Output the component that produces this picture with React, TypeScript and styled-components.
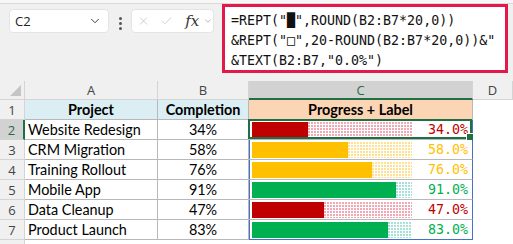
import styled, { createGlobalStyle, css } from 'styled-components';
import { X, Check, ChevronDown } from 'lucide-react';

const GREEN_SEL = '#1e6f43';
const SPILL = '#4472c4';
const GRID = '#b8b8b8';
const HEAD_LINE = '#d4d4d4';

type Tone = 'red' | 'amber' | 'green';

const toneColor: Record<Tone, string> = {
  red: '#c00000',
  amber: '#ffc000',
  green: '#00b050',
};

const toneDots: Record<Tone, string> = {
  red: 'rgba(232, 96, 120, 0.55)',
  amber: 'rgba(255, 200, 60, 0.55)',
  green: 'rgba(60, 190, 170, 0.45)',
};

const rows: { name: string; pct: number; tone: Tone }[] = [
  { name: 'Website Redesign', pct: 34, tone: 'red' },
  { name: 'CRM Migration', pct: 58, tone: 'amber' },
  { name: 'Training Rollout', pct: 76, tone: 'amber' },
  { name: 'Mobile App', pct: 91, tone: 'green' },
  { name: 'Data Cleanup', pct: 47, tone: 'red' },
  { name: 'Product Launch', pct: 83, tone: 'green' },
];

const GlobalStyle = createGlobalStyle`
  body {
    margin: 0;
    background: #ffffff;
  }
  * {
    box-sizing: border-box;
  }
`;

const Frame = styled.div`
  width: 513px;
  height: 244px;
  overflow: hidden;
  background: #ffffff;
  font-family: Lato, 'Open Sans', sans-serif;
  color: #000;
`;

const Toolbar = styled.div`
  height: 81px;
  background: #f0f0f0;
`;

const TopStrip = styled.div`
  height: 4px;
  background: #f7f7f7;
  border-bottom: 1px solid #dadada;
`;

const ToolRow = styled.div`
  display: flex;
  align-items: flex-start;
  padding-left: 9px;
`;

const NameBox = styled.div`
  margin-top: 5px;
  width: 100px;
  height: 24px;
  background: #fff;
  border: 1px solid #e4e4e4;
  border-radius: 4px;
  display: flex;
  align-items: center;
  justify-content: space-between;
  padding: 0 6px 0 5px;
  font-family: 'Open Sans', sans-serif;
  font-size: 13px;
  color: #222;
`;

const Dots = styled.div`
  width: 22px;
  margin-top: 13px;
  display: flex;
  flex-direction: column;
  align-items: center;
  gap: 2px;

  span {
    width: 3px;
    height: 3px;
    border-radius: 50%;
    background: #555;
  }
`;

const FxBox = styled.div`
  margin-top: 5px;
  width: 83px;
  height: 24px;
  background: #fff;
  border: 1px solid #e4e4e4;
  border-radius: 4px;
  display: flex;
  align-items: center;
  padding-left: 5px;
  gap: 10px;
  color: #bcbcbc;
`;

const FxLabel = styled.span`
  font-family: 'DejaVu Serif', 'Liberation Serif', serif;
  font-style: italic;
  font-size: 15px;
  color: #333;
  margin-left: 2px;
  margin-right: -6px;
`;

const FormulaBox = styled.div`
  margin-left: 8px;
  width: 286px;
  height: 69px;
  background: #fff;
  border: 3px solid #e2194a;
  padding: 4px 0 0 6px;
  font-family: 'DejaVu Sans Mono', 'Liberation Mono', monospace;
  font-size: 13.3px;
  line-height: 20px;
  white-space: pre;
  color: #111;
`;

const Sheet = styled.div`
  display: grid;
  grid-template-columns: 25px 133px 91px 224px 1fr;
  grid-template-rows: 19px repeat(8, 20px);
`;

const headBase = css`
  background: #f0f0f0;
  display: flex;
  align-items: center;
  justify-content: center;
  font-family: 'Open Sans', sans-serif;
  font-size: 13px;
  color: #444;
`;

const Corner = styled.div`
  ${headBase};
  position: relative;
  border-right: 1px solid ${HEAD_LINE};
  border-bottom: 1px solid ${HEAD_LINE};

  &::after {
    content: '';
    position: absolute;
    right: 3px;
    bottom: 3px;
    border-style: solid;
    border-width: 0 0 11px 11px;
    border-color: transparent transparent #c4c4c4 transparent;
  }
`;

const ColHead = styled.div<{ $active?: boolean }>`
  ${headBase};
  border-right: 1px solid ${HEAD_LINE};
  border-bottom: 1px solid ${HEAD_LINE};
  ${(p) =>
    p.$active &&
    css`
      background: #d2d2d2;
      color: ${GREEN_SEL};
      border-bottom: 2px solid ${GREEN_SEL};
    `}
`;

const RowHead = styled.div<{ $active?: boolean }>`
  ${headBase};
  border-right: 1px solid ${HEAD_LINE};
  border-bottom: 1px solid ${HEAD_LINE};
  ${(p) =>
    p.$active &&
    css`
      background: #d2d2d2;
      color: ${GREEN_SEL};
      border-right: 2px solid ${GREEN_SEL};
    `}
`;

const Cell = styled.div<{ $align?: 'left' | 'center' }>`
  display: flex;
  align-items: center;
  justify-content: ${(p) => (p.$align === 'center' ? 'center' : 'flex-start')};
  padding: 0 3px;
  border-right: 1px solid ${GRID};
  border-bottom: 1px solid ${GRID};
  font-size: 14.4px;
  white-space: nowrap;
`;

const TitleCell = styled(Cell)<{ $peach?: boolean }>`
  justify-content: center;
  font-weight: 700;
  background: ${(p) => (p.$peach ? '#fcd5b4' : '#daeef3')};
`;

const BarCell = styled.div<{ $last?: boolean }>`
  position: relative;
  display: flex;
  align-items: center;
  padding-left: 3px;
  border-right: 1px solid ${SPILL};
  border-bottom: 1px solid ${(p) => (p.$last ? SPILL : GRID)};
  box-shadow: inset 1px 0 0 ${SPILL};
`;

const Filled = styled.span<{ $tone: Tone }>`
  height: 16px;
  background: ${(p) => toneColor[p.$tone]};
`;

const Empty = styled.span<{ $tone: Tone }>`
  height: 16px;
  background-image: radial-gradient(
    circle at 1px 1px,
    ${(p) => toneDots[p.$tone]} 0.8px,
    transparent 1.1px
  );
  background-size: 3px 3px;
`;

const Label = styled.span<{ $tone: Tone }>`
  margin-left: 16px;
  font-family: 'DejaVu Sans Mono', 'Liberation Mono', monospace;
  font-size: 13.3px;
  color: ${(p) => toneColor[p.$tone]};
`;

const Selection = styled.div`
  position: absolute;
  left: -1px;
  top: -1px;
  right: 0;
  bottom: 0;
  border: 2px solid ${GREEN_SEL};
  pointer-events: none;

  &::after {
    content: '';
    position: absolute;
    right: -4px;
    bottom: -4px;
    width: 6px;
    height: 6px;
    background: ${GREEN_SEL};
    border: 1px solid #fff;
  }
`;

const Blank = styled.div``;

function Bar({ pct, tone }: { pct: number; tone: Tone }) {
  const filled = Math.round((pct / 100) * 20);
  return (
    <>
      <Filled $tone={tone} style={{ width: filled * 8 }} />
      <Empty $tone={tone} style={{ width: (20 - filled) * 8 }} />
      <Label $tone={tone}>{pct.toFixed(1)}%</Label>
    </>
  );
}

function Row({
  index,
  name,
  pct,
  tone,
}: {
  index: number;
  name: string;
  pct: number;
  tone: Tone;
}) {
  const selected = index === 0;
  return (
    <>
      <RowHead $active={selected}>{index + 2}</RowHead>
      <Cell>{name}</Cell>
      <Cell $align="center">{pct}%</Cell>
      <BarCell $last={index === rows.length - 1}>
        <Bar pct={pct} tone={tone} />
        {selected && <Selection />}
      </BarCell>
      <Blank />
    </>
  );
}

export default function App() {
  return (
    <Frame>
      <GlobalStyle />
      <Toolbar>
        <TopStrip />
        <ToolRow>
          <NameBox>
            C2
            <ChevronDown size={14} strokeWidth={1.6} color="#333" />
          </NameBox>
          <Dots>
            <span />
            <span />
            <span />
          </Dots>
          <FxBox>
            <X size={16} strokeWidth={1.3} />
            <Check size={16} strokeWidth={1.3} />
            <FxLabel>fx</FxLabel>
            <ChevronDown size={12} strokeWidth={1.5} color="#888" />
          </FxBox>
          <FormulaBox>
            {'=REPT("█",ROUND(B2:B7*20,0))\n&REPT("□",20-ROUND(B2:B7*20,0))&"\n&TEXT(B2:B7,"0.0%")'}
          </FormulaBox>
        </ToolRow>
      </Toolbar>
      <Sheet>
        <Corner />
        <ColHead>A</ColHead>
        <ColHead>B</ColHead>
        <ColHead $active>C</ColHead>
        <ColHead>D</ColHead>

        <RowHead>1</RowHead>
        <TitleCell>Project</TitleCell>
        <TitleCell>Completion</TitleCell>
        <TitleCell $peach>Progress + Label</TitleCell>
        <Blank />

        {rows.map((r, i) => (
          <Row key={r.name} index={i} {...r} />
        ))}

        <RowHead />
        <Blank />
        <Blank />
        <Blank />
        <Blank />
      </Sheet>
    </Frame>
  );
}
